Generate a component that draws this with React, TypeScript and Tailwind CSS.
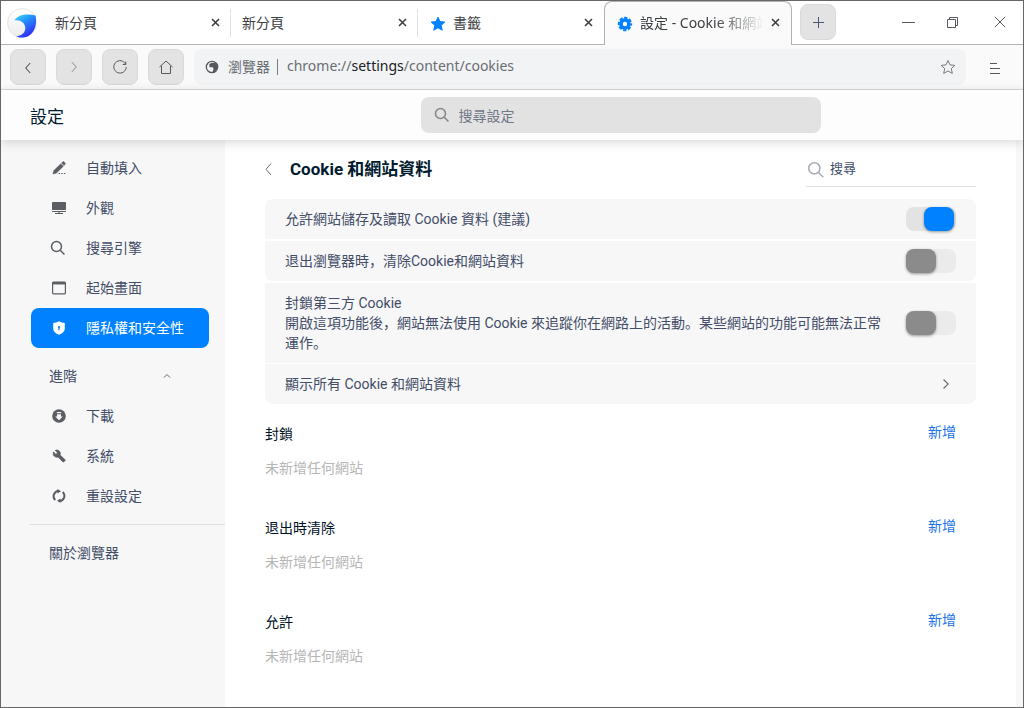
import type { ReactNode } from "react";

const UI = "font-['Noto_Sans','Noto_Sans_CJK_SC',sans-serif]";
const PAGE = "font-[Roboto,'Noto_Sans_CJK_SC',sans-serif]";

function Icon({ size = 16, box = 16, className = "", children }: { size?: number; box?: number; className?: string; children: ReactNode }) {
  return (
    <svg width={size} height={size} viewBox={`0 0 ${box} ${box}`} className={`shrink-0 ${className}`} fill="none" stroke="currentColor">
      {children}
    </svg>
  );
}

function TabClose() {
  return (
    <Icon size={9} box={9} className="text-[#3c4043]">
      <path d="M1 1l7 7M8 1L1 8" strokeWidth="1.6" />
    </Icon>
  );
}

function Logo() {
  return (
    <svg width="30" height="30" viewBox="0 0 30 30" className="shrink-0">
      <defs>
        <linearGradient id="wave" x1="0" y1="0" x2="0.6" y2="1">
          <stop offset="0" stopColor="#45e0ee" />
          <stop offset="0.4" stopColor="#2395fb" />
          <stop offset="1" stopColor="#3128f5" />
        </linearGradient>
        <linearGradient id="disc" x1="0" y1="0" x2="0" y2="1">
          <stop offset="0" stopColor="#ffffff" />
          <stop offset="1" stopColor="#ececec" />
        </linearGradient>
      </defs>
      <circle cx="15" cy="15" r="14.500" fill="url(#disc)" stroke="#e4e4e4" />
      <path d="M7.500 12.300C11 6.500 20 5.500 28.500 7.500C30.500 16 27.500 27 18 29.200C14.500 29.900 11.500 29.500 9 28.200C14.500 28 18.300 24.800 18.300 20C18.300 15 13.500 11.500 7.500 12.300Z" fill="url(#wave)" />
    </svg>
  );
}

function NavButton({ children, muted = false }: { children: ReactNode; muted?: boolean }) {
  return (
    <button className={`flex h-9 w-9 shrink-0 items-center justify-center rounded-lg border border-[#d9d9d9] bg-[#e3e3e3] ${muted ? "text-[#a0a0a0]" : "text-[#55585d]"}`}>
      {children}
    </button>
  );
}

function SearchGlyph({ size, width = 1.5 }: { size: number; width?: number }) {
  return (
    <Icon size={size}>
      <circle cx="6.500" cy="6.500" r="5" strokeWidth={width} />
      <path d="M10.200 10.200l4.300 4.300" strokeWidth={width} />
    </Icon>
  );
}

function SideItem({ icon, label, active = false }: { icon: ReactNode; label: string; active?: boolean }) {
  return (
    <div className={`flex h-10 w-[178px] items-center rounded-lg pl-5 ${active ? "bg-[#0081ff] text-white" : "text-[#434d68]"}`}>
      <span className={`flex h-4 w-4 items-center justify-center ${active ? "text-white" : "text-[#5b5f64]"}`}>{icon}</span>
      <span className="ml-[19px]">{label}</span>
    </div>
  );
}

function Toggle({ on = false }: { on?: boolean }) {
  return (
    <div className={`flex h-6 w-[50px] shrink-0 rounded-lg ${on ? "justify-end bg-[#e3e3e3] pr-0.5" : "bg-[#ebebeb]"}`}>
      <div className={`h-6 w-[30px] rounded-lg shadow-[0_1px_3px_rgba(0,0,0,0.4)] ${on ? "bg-[#0081ff]" : "bg-[#8b8b8b]"}`} />
    </div>
  );
}

function SiteSection({ title }: { title: string }) {
  return (
    <section className="h-[94px]">
      <div className="flex h-[38px] justify-between pr-5">
        <h2 className="leading-9 text-[#001226]">{title}</h2>
        <button className="h-8 text-[#1a73e8]">新增</button>
      </div>
      <p className="leading-7 text-[#b6b6b6]">未新增任何網站</p>
    </section>
  );
}

export default function App() {
  return (
    <div className={`flex h-[708px] w-[1024px] flex-col overflow-hidden border border-[#666] bg-white text-sm ${PAGE}`}>
      <div className={`flex h-11 shrink-0 text-[#3c4043] ${UI}`}>
        <div className="flex w-[603px] border-b border-[#b2b2b2]">
          <div className="flex w-[229px] items-center pl-1.5 pr-2.5">
            <Logo />
            <span className="ml-[18px] flex-1">新分頁</span>
            <TabClose />
          </div>
          <div className="mt-2 h-7 w-px bg-[#e0e0e0]" />
          <div className="flex w-[186px] items-center pl-[11px] pr-2.5">
            <span className="flex-1">新分頁</span>
            <TabClose />
          </div>
          <div className="mt-2 h-7 w-px bg-[#e0e0e0]" />
          <div className="flex flex-1 items-center pl-3 pr-[11px]">
            <Icon size={16} className="mt-0.5 text-[#0081ff]">
              <path d="M8 1.200l2 4.400 4.800.5-3.600 3.200 1 4.900L8 11.700l-4.200 2.500 1-4.900-3.600-3.200 4.800-.5z" fill="currentColor" strokeWidth="1" />
            </Icon>
            <span className="ml-[7px] flex-1">書籤</span>
            <TabClose />
          </div>
        </div>
        <div className="flex w-[188px] items-center rounded-t-lg border-x border-t border-[#b2b2b2] bg-[#fafafa] pb-0.5 pl-3 pr-[11px]">
          <Icon size={16} className="mt-[3px] text-[#0081ff]">
            <circle cx="8" cy="8" r="4" strokeWidth="3.600" />
            <circle cx="8" cy="8" r="6.200" strokeWidth="2" strokeDasharray="3.270 1.600" strokeDashoffset="1.635" />
          </Icon>
          <span className="ml-[7px] w-[122px] overflow-hidden whitespace-nowrap [mask-image:linear-gradient(to_right,black_75px,transparent_125px)]">設定 - Cookie 和網站資料</span>
          <span className="ml-auto flex"><TabClose /></span>
        </div>
        <div className="flex flex-1 items-start border-b border-[#b2b2b2] pl-2 pt-[3px]">
          <NavButton>
            <Icon size={13} box={13} className="text-[#4b5673]"><path d="M6.500 1v11M1 6.500h11" /></Icon>
          </NavButton>
          <div className="flex h-9 flex-1 items-center pl-[66px] text-[#55575b]">
            <span className="h-px w-[13px] bg-[#55575b]" />
            <Icon size={12} box={12} className="ml-8 mt-px"><path d="M.5 2.500h8v8h-8zM2.500 2.500v-2h8v8h-2" /></Icon>
            <Icon size={12} box={12} className="ml-[35px]"><path d="M.8.8l10.400 10.400M11.200.8L.8 11.200" /></Icon>
          </div>
        </div>
      </div>

      <div className={`flex h-[45px] shrink-0 items-start border-b border-[#dadada] bg-[#fafafa] pl-[9px] pt-1 ${UI}`}>
        <div className="flex gap-2.5">
          <NavButton><Icon size={14} box={14} className="mt-0.5"><path d="M9.200 2L4.800 7l4.400 5" strokeWidth="1.100" /></Icon></NavButton>
          <NavButton muted><Icon size={14} box={14}><path d="M4.800 2l4.400 5-4.400 5" strokeWidth="1.100" /></Icon></NavButton>
          <NavButton>
            <Icon size={14} box={14}><path d="M12.600 4.200A6.200 6.200 0 1 0 13.200 7M12.800 1.500V4.500H9.800" strokeWidth="1" /></Icon>
          </NavButton>
          <NavButton>
            <Icon size={14} box={14}><path d="M.5 7L7 1l6.500 6M2.500 6v7.500h9V6" strokeWidth="1" /></Icon>
          </NavButton>
        </div>
        <div className="ml-2.5 flex h-9 w-[772px] items-center rounded-lg bg-[#f1f3f5] pl-[11px] pr-2.5 text-[#6b6e72]">
          <Icon size={14} box={14} className="text-[#55585c]">
            <circle cx="7" cy="7" r="5.700" strokeWidth="1.300" />
            <path d="M4 5.200C4.500 3.300 7 1.500 12.300 3.500C13.500 8 11 12.500 6.500 12.800C8.500 11 9 8.500 7.800 7.200H4.500V5.200Z" fill="currentColor" stroke="none" />
          </Icon>
          <span className="ml-[9px]">瀏覽器</span>
          <span className="ml-[7px] h-4 w-px bg-[#7b7d80]" />
          <span className="-mt-0.5 ml-[9px]">chrome://<span className="text-[#202124]">settings</span>/content/cookies</span>
          <Icon size={16} className="ml-auto text-[#777a7f]">
            <path d="M8 1.500l2 4.400 4.800.5-3.500 3.200 1 4.800L8 12l-4.300 2.400 1-4.800-3.500-3.200 4.800-.5z" />
          </Icon>
        </div>
        <Icon size={12} box={12} className="ml-6 mt-[13px] text-[#55575b]"><path d="M0 1.500h7M0 6.500h10M0 11.500h10" /></Icon>
      </div>

      <header className="relative z-10 flex h-[50px] shrink-0 items-center bg-[#fdfdfd] pl-[29px] shadow-[0_2px_10px_rgba(0,0,0,0.16)]">
        <h1 className="w-[391px] pt-1 text-[17px] text-[#001a2e]">設定</h1>
        <div className="flex h-9 w-[400px] items-center rounded-lg bg-[#e2e2e2] pl-[13px] text-[#858585]">
          <SearchGlyph size={16} />
          <span className="ml-[8.500px] pt-0.5 text-[#717789]">搜尋設定</span>
        </div>
      </header>

      <div className="flex min-h-0 flex-1">
        <nav className="w-[224px] shrink-0 bg-[#f7f7f7] pl-[30px] pt-2">
          <SideItem label="自動填入" icon={
            <Icon size={14} box={14}><path d="M.8 13l1-3.500L8.800 2.700l2.600 2.600L4.300 12.200zM9.500 2L11 .5q1.200-.5 2.500 2.300l-1.500 1.800z" fill="currentColor" stroke="currentColor" strokeWidth=".4" /><path d="M6.500 12.500h7" strokeDasharray="1.500 1.200" /></Icon>
          } />
          <SideItem label="外觀" icon={
            <Icon size={14} box={14}><path d="M1 1h12q1 0 1 1v7H0V2q0-1 1-1z" fill="currentColor" stroke="none" /><path d="M0 10.500h14M3 12.500h8M7 10v3" strokeWidth="1" /></Icon>
          } />
          <SideItem label="搜尋引擎" icon={<span className="-ml-0.5 flex"><SearchGlyph size={16} /></span>} />
          <SideItem label="起始畫面" icon={
            <Icon size={14} box={14}><rect x=".6" y="1.100" width="12.800" height="11.800" rx="1" strokeWidth="1.200" /><path d="M.5 2.200h13" strokeWidth="2.500" /></Icon>
          } />
          <SideItem active label="隱私權和安全性" icon={
            <Icon size={14} box={14}><path d="M7 .3c2 1.200 4 1.600 5.800 1.800v5.600c0 2.800-2.500 4.800-5.800 6-3.300-1.200-5.800-3.200-5.800-6V2.100C3 1.900 5 1.500 7 .3z" fill="currentColor" stroke="none" /><circle cx="7" cy="6" r="1" className="fill-[#0081ff] stroke-none" /><path d="M7 6v3.200" className="stroke-[#0081ff]" strokeWidth="1.200" /></Icon>
          } />
          <div className="mt-2 flex h-10 w-[178px] items-center justify-between pl-[18px] pr-[38px] text-[#434d68]">
            進階
            <Icon size={8} box={8} className="text-[#666]"><path d="M1 5.500L4 2.500l3 3" /></Icon>
          </div>
          <SideItem label="下載" icon={
            <Icon size={14} box={14}><circle cx="7" cy="7" r="6.800" fill="currentColor" stroke="none" /><path d="M4.800 3.600h4.400" className="stroke-[#f7f7f7]" strokeWidth="1.200" /><path d="M5 5.300h4v2.200h1.800L7 11.200 3.200 7.500H5z" className="fill-[#f7f7f7]" stroke="none" /></Icon>
          } />
          <SideItem label="系統" icon={
            <Icon size={16} box={24}><path d="M22.700 19l-9.100-9.100c.9-2.300.4-5-1.500-6.900-2-2-5-2.400-7.400-1.300L9 6 6 9 1.600 4.700C.4 7.100.9 10.100 2.900 12.100c1.900 1.900 4.600 2.400 6.900 1.500l9.100 9.100c.4.400 1 .4 1.400 0l2.300-2.300c.5-.4.5-1.100.1-1.400z" fill="currentColor" stroke="currentColor" strokeWidth="1.500" transform="translate(2.500 2.200) scale(.82)" /></Icon>
          } />
          <SideItem label="重設設定" icon={
            <Icon size={14} box={14}><path d="M3.300 11A5.200 5.200 0 0 1 6.500 2M10.700 3a5.200 5.200 0 0 1-3.200 9" strokeWidth="2" /><path d="M5.500 0l3.500 2.200-3.500 2.300zM8.500 9.500v4.500L5 11.800z" fill="currentColor" stroke="none" /></Icon>
          } />
          <div className="-ml-px mt-2 h-px bg-[#dfdfdf]" />
          <div className="flex h-14 items-center pl-[18px] text-[#434d68]">關於瀏覽器</div>
        </nav>

        <main className="flex-1 bg-white pl-10 pr-10">
          <div className="flex h-[47px] items-start justify-between">
            <div className="flex h-[58px] items-center">
              <Icon size={14} box={14} className="-ml-1 text-[#686d7b]"><path d="M10 1.500L5 7.300l5 5.700" /></Icon>
              <h2 className="ml-[15px] text-[17px] font-bold text-[#001a2e]">Cookie 和網站資料</h2>
            </div>
            <div className="flex h-[47px] w-[170px] items-center border-b border-[#dfdfdf] pl-px pt-3 text-[#a9adba]">
              <span className="flex pt-0.5"><SearchGlyph size={18} width={1.400} /></span>
              <span className="ml-[5px] text-[13px] text-[#434d68]">搜尋</span>
            </div>
          </div>
          <div className="mt-3 w-[711px] text-[#434d68]">
            <div className="flex h-10 items-center justify-between rounded-t-lg bg-[#f7f7f7] px-5">允許網站儲存及讀取 Cookie 資料 (建議)<Toggle on /></div>
            <div className="mt-0.5 flex h-10 items-center justify-between rounded-b-lg bg-[#f7f7f7] px-5">退出瀏覽器時，清除Cookie和網站資料<Toggle /></div>
            <div className="mt-0.5 flex h-20 items-center justify-between bg-[#f7f7f7] px-5">
              <div className="w-[602px] leading-5">
                <p>封鎖第三方 Cookie</p>
                <p>開啟這項功能後，網站無法使用 Cookie 來追蹤你在網路上的活動。某些網站的功能可能無法正常運作。</p>
              </div>
              <Toggle />
            </div>
            <div className="mt-px flex h-10 items-center justify-between rounded-b-lg bg-[#f7f7f7] pl-5 pr-[25px]">
              顯示所有 Cookie 和網站資料
              <Icon size={10} box={10} className="text-[#666]"><path d="M2.500.5L7.200 5 2.500 9.500" strokeWidth="1.050" /></Icon>
            </div>
            <div className="pt-3">
              <SiteSection title="封鎖" />
              <SiteSection title="退出時清除" />
              <SiteSection title="允許" />
            </div>
          </div>
        </main>
        <div className="w-[7px] shrink-0 bg-[#f7f7f7]" />
      </div>
    </div>
  );
}
